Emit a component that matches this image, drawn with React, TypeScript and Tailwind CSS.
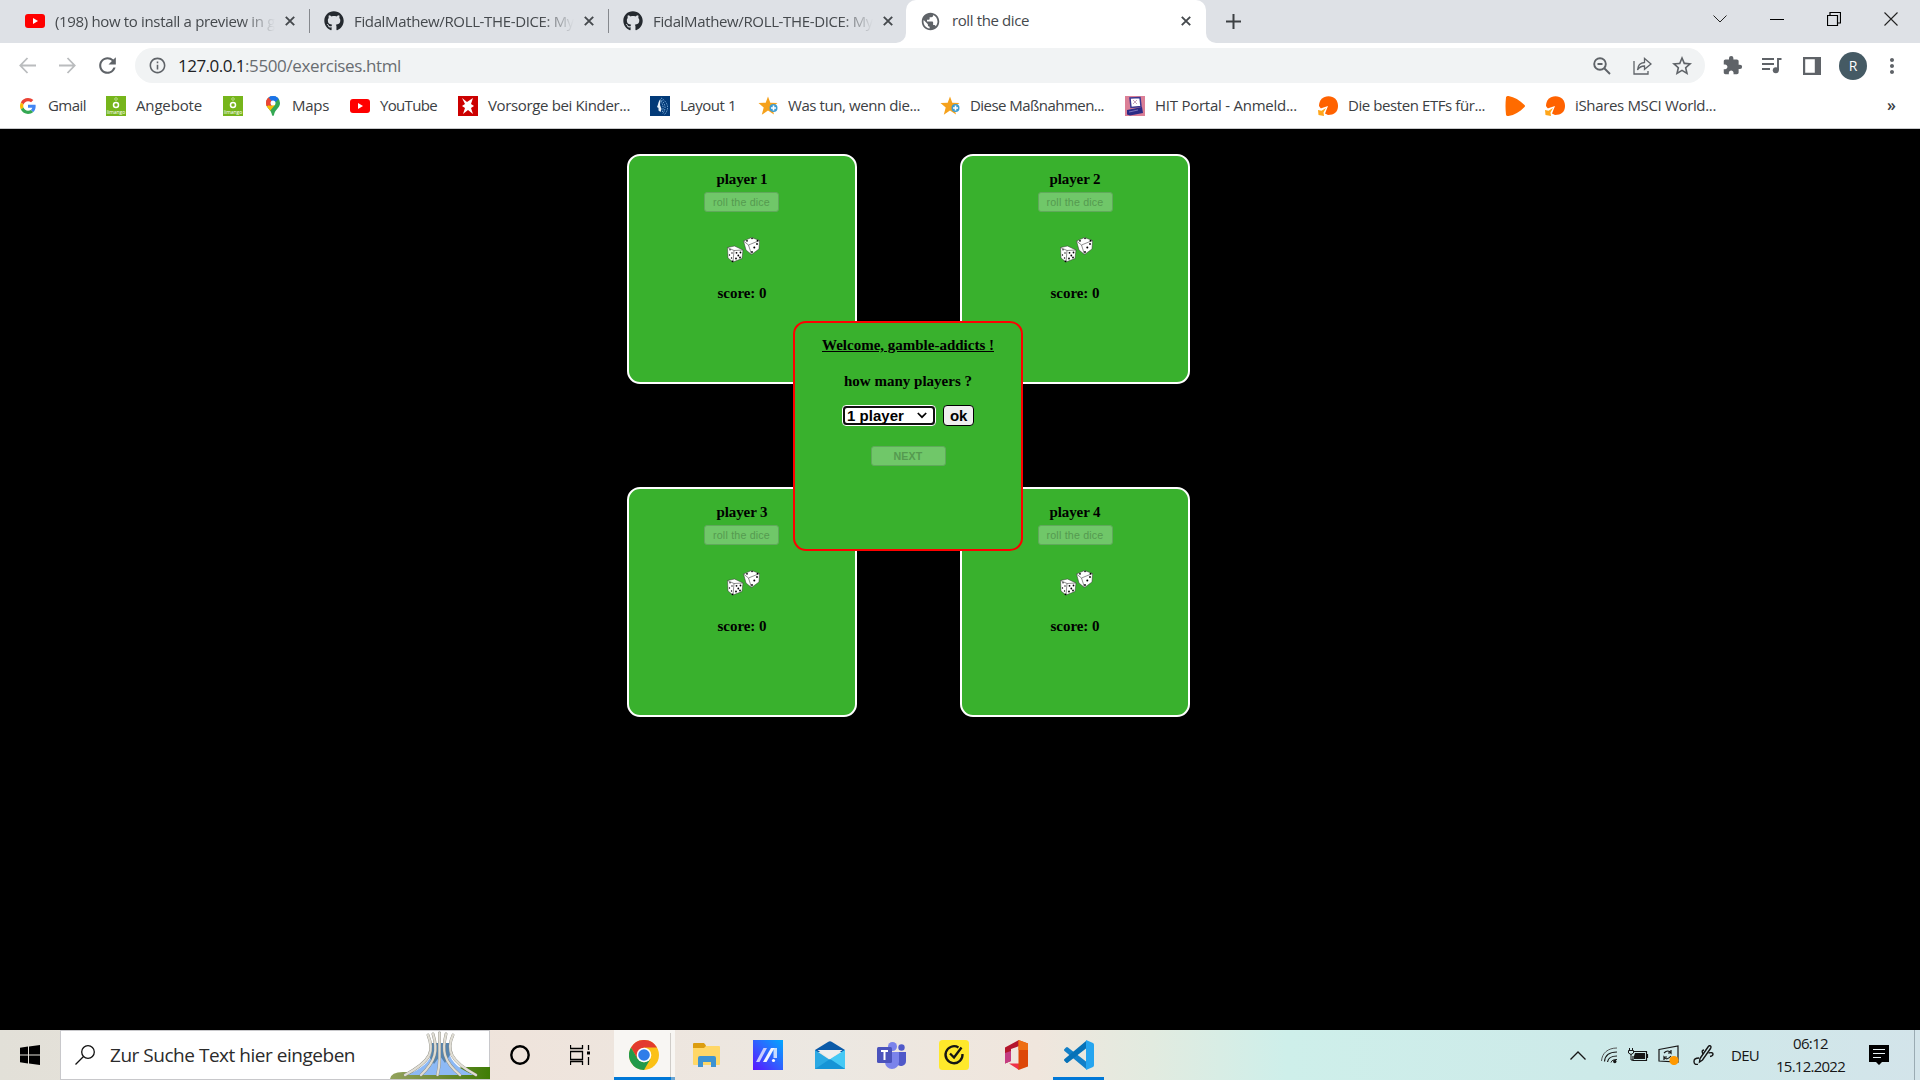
import { useLayoutEffect, useRef, useState, type ReactNode } from "react";
import {
  MdOutlineInfo,
  MdPublic,
  MdExtension,
  MdRefresh,
  MdStarOutline,
  MdMoreVert,
} from "react-icons/md";
import { FaGithub } from "react-icons/fa";

/** Single line of text whose tracking is computed so that it spans `w` pixels. */
function Fit({ w, className = "", children }: { w: number; className?: string; children: string }) {
  const ref = useRef<HTMLSpanElement>(null);
  const [spacing, setSpacing] = useState(0);
  useLayoutEffect(() => {
    if (ref.current) setSpacing((w - ref.current.getBoundingClientRect().width) / children.length);
  }, []);
  return (
    <span ref={ref} className={`inline-block shrink-0 whitespace-pre ${className}`} style={{ letterSpacing: `${spacing}px` }}>
      {children}
    </span>
  );
}

function YouTubeIcon() {
  return (
    <svg className="block h-[14px] w-5 shrink-0" viewBox="0 0 20 14">
      <rect width="20" height="14" rx="3" fill="#f00" />
      <path d="M8 4l5 3-5 3z" fill="#fff" />
    </svg>
  );
}

function CloseIcon() {
  return (
    <svg className="block size-[10px] shrink-0" viewBox="0 0 10 10">
      <path d="M0.8 0.8l8.4 8.4M9.2 0.8L0.8 9.2" stroke="#45494d" strokeWidth="1.9" />
    </svg>
  );
}

function Tab({ icon, title, w }: { icon: ReactNode; title: string; w: number }) {
  return (
    <div className="flex h-full w-[299px] items-center pl-[14px]">
      <div className="w-[30px]">{icon}</div>
      <div className="w-[220px] overflow-hidden pb-px [mask-image:linear-gradient(to_right,black_85%,transparent)]">
        <Fit w={w} className="text-[15px]">{title}</Fit>
      </div>
      <div className="ml-[10px]">
        <CloseIcon />
      </div>
      <div className="ml-auto h-6 w-px bg-[#85888d]" />
    </div>
  );
}

function TabStrip() {
  return (
    <div className="flex h-[43px] bg-[#dee1e6] text-[#45494d]">
      <div className="flex h-[42px] w-[907px] pl-[11px]">
        <Tab icon={<YouTubeIcon />} title="(198) how to install a preview in g" w={220} />
        <Tab icon={<FaGithub size={20} color="#24292f" />} title="FidalMathew/ROLL-THE-DICE: My" w={220} />
        <div className="flex h-full w-[290px] items-center pl-[14px]">
          <div className="w-[30px]">
            <FaGithub size={20} color="#24292f" />
          </div>
          <div className="w-[220px] overflow-hidden pb-px [mask-image:linear-gradient(to_right,black_85%,transparent)]">
            <Fit w={220} className="text-[15px]">FidalMathew/ROLL-THE-DICE: My</Fit>
          </div>
          <div className="ml-[10px]">
            <CloseIcon />
          </div>
        </div>
      </div>
      <div className="-ml-[11px] flex">
        <div className="h-full w-[10px] bg-white">
          <div className="h-full rounded-br-[10px] bg-[#dee1e6]" />
        </div>
        <div className="flex h-[43px] w-[300px] items-center rounded-t-[10px] bg-white pr-[15px] pb-px pl-[14px]">
          <MdPublic size={21} color="#5f6368" />
          <Fit w={77} className="ml-[11px] pb-px text-[15px]">roll the dice</Fit>
          <div className="ml-auto">
            <CloseIcon />
          </div>
        </div>
        <div className="h-full w-[10px] bg-white">
          <div className="h-full rounded-bl-[10px] bg-[#dee1e6]" />
        </div>
      </div>
      <svg className="mt-[14px] ml-[10px] block size-[15px]" viewBox="0 0 15 15">
        <path d="M7.5 0v15M0 7.5h15" stroke="#3c4043" strokeWidth="2" />
      </svg>
      <div className="mr-[22px] ml-auto flex h-[38px] items-center gap-[43px] text-black">
        <svg className="h-2 w-[14px]" viewBox="0 0 14 8">
          <path d="M.5.5L7 7 13.500.5" fill="none" stroke="#222" />
        </svg>
        <div className="h-px w-[14px] bg-black" />
        <svg className="size-[14px]" viewBox="0 0 14 14">
          <path d="M.5 3.500h10v10H.5zM3 3V.5h10.500V11H11" fill="none" stroke="#000" strokeWidth="1.2" />
        </svg>
        <svg className="size-[14px]" viewBox="0 0 14 14">
          <path d="M.5.5l13 13M13.500.5l-13 13" stroke="#222" strokeWidth="1.1" />
        </svg>
      </div>
    </div>
  );
}

function Arrow({ flip = false }: { flip?: boolean }) {
  return (
    <svg className={flip ? "size-[17px] rotate-180" : "size-[17px]"} viewBox="0 0 17 17">
      <path d="M17 8.500H2M8.500 1L1.300 8.500l7.200 7.500" fill="none" stroke="#babcbe" strokeWidth="1.8" />
    </svg>
  );
}

function Toolbar() {
  return (
    <div className="flex h-[43px] items-center bg-white pt-[2px]">
      <div className="ml-[19px]"><Arrow /></div>
      <div className="ml-[23px]"><Arrow flip /></div>
      <MdRefresh className="ml-[19px]" size={25} color="#5f6368" />
      <div className="ml-[15px] flex h-[35px] w-[1570px] items-center rounded-full bg-[#f1f3f4] pr-[11px] pl-[13px]">
        <MdOutlineInfo size={19} color="#5f6368" />
        <Fit w={67} className="ml-[11px] text-[17px] text-[#202124]">127.0.0.1</Fit>
        <Fit w={156} className="text-[17px] text-[#696d71]">:5500/exercises.html</Fit>
        <svg className="ml-auto size-[18px]" viewBox="0 0 18 18">
          <circle cx="7" cy="7" r="5.800" fill="none" stroke="#5f6368" strokeWidth="1.900" />
          <path d="M11 11l6 6M4.500 7h5" fill="none" stroke="#5f6368" strokeWidth="1.900" />
        </svg>
        <svg className="ml-[22px] h-[18px] w-[19px]" viewBox="0 0 19 18">
          <path d="M1 4v13h14v-3M4.500 13c.4-5 3-7.300 7-7.500V1.500L18 7l-6.500 5.300V9C8.500 9 6.300 10 4.500 13z" fill="none" stroke="#5f6368" strokeWidth="1.3" />
        </svg>
        <MdStarOutline className="ml-[18px]" size={24} color="#5f6368" />
      </div>
      <MdExtension className="ml-[17px]" size={21} color="#5f6368" />
      <svg className="ml-[19px] h-[17px] w-5" viewBox="0 0 20 17">
        <path d="M0 2h12M0 7h12M0 12h8M19.500 2h-3.500v11" fill="none" stroke="#5f6368" strokeWidth="1.9" />
        <circle cx="13.800" cy="13.300" r="3" fill="#5f6368" />
      </svg>
      <svg className="ml-[21px] size-[18px]" viewBox="0 0 18 18">
        <path d="M0 0h18v18H0zM2.200 2.200v13.600h9.600V2.200z" fill="#5f6368" fillRule="evenodd" />
      </svg>
      <div className="ml-[18px] flex size-7 items-center justify-center rounded-full bg-[#455a64] text-[14px] text-white">R</div>
      <MdMoreVert className="ml-[13px]" size={24} color="#5f6368" />
    </div>
  );
}

function GoogleG() {
  return (
    <svg className="size-4" viewBox="0 0 48 48">
      <path fill="#ea4335" d="M24 9.500c3.540 0 6.710 1.220 9.210 3.600l6.850-6.850C35.900 2.380 30.470 0 24 0 14.620 0 6.510 5.380 2.560 13.220l7.980 6.190C12.430 13.720 17.740 9.500 24 9.500z" />
      <path fill="#4285f4" d="M46.980 24.550c0-1.570-.15-3.090-.38-4.550H24v9.020h12.940c-.58 2.960-2.260 5.480-4.780 7.180l7.730 6c4.510-4.180 7.090-10.360 7.090-17.650z" />
      <path fill="#fbbc05" d="M10.530 28.590c-.48-1.450-.76-2.990-.76-4.590s.27-3.140.76-4.590l-7.980-6.190C.92 16.460 0 20.120 0 24c0 3.880.92 7.540 2.560 10.780l7.970-6.190z" />
      <path fill="#34a853" d="M24 48c6.480 0 11.930-2.130 15.890-5.810l-7.730-6c-2.150 1.450-4.920 2.300-8.160 2.300-6.260 0-11.570-4.220-13.470-9.910l-7.980 6.190C6.510 42.620 14.620 48 24 48z" />
    </svg>
  );
}

function LimangoIcon() {
  return (
    <div className="flex size-5 flex-col items-center justify-end bg-[#76b51b]">
      <svg className="h-[13px] w-3" viewBox="0 0 12 13">
        <circle cx="6" cy="9" r="2.500" fill="none" stroke="#fff" strokeWidth="1.500" />
        <circle cx="6" cy="3" r="1.300" fill="none" stroke="#b5d986" />
      </svg>
      <span className="h-[7px] text-[5px] leading-[6px] text-white">limango</span>
    </div>
  );
}

function MapsIcon() {
  return (
    <svg className="h-5 w-[14px]" viewBox="0 0 14 20">
      <clipPath id="pin">
        <path d="M7 0a7 7 0 0 1 7 7c0 5-5 6-6 12q-1 2-2 0C5 13 0 12 0 7a7 7 0 0 1 7-7z" />
      </clipPath>
      <g clipPath="url(#pin)">
        <rect width="14" height="20" fill="#34a853" />
        <path d="M0 15V8l4-4 5 5-6 7z" fill="#fbbc04" />
        <path d="M0 0h4l3 4-5 6H0z" fill="#ea4335" />
        <path d="M3 0h11L5 10 3.500 5z" fill="#4285f4" />
        <path d="M0 3l3-2 4 6-3 3-4-3z" fill="#ea4335" />
        <path d="M3 0h9l1 3-5 4-5-5z" fill="#1a73e8" />
      </g>
      <circle cx="7" cy="7" r="2.500" fill="#fff" />
    </svg>
  );
}

function VorsorgeIcon() {
  return (
    <svg className="size-5" viewBox="0 0 20 20">
      <rect width="20" height="20" fill="#c00" />
      <path d="M4 2l5 4 6-4-2 6 3 2-3 2 2 6-5-4-5 4 2-6-3-2 3-2z" fill="#fff" />
    </svg>
  );
}

function LayoutIcon() {
  return (
    <svg className="size-5" viewBox="0 0 20 20">
      <rect width="20" height="20" fill="#023a78" />
      <path d="M10.500 3C8 6 8.500 8 7 11l1.500 1v2.500l2 1.500 1-3-1.500-4z" fill="#e8f0f8" />
      <path d="M11 2c7 4 9 11 3 17M11.500 4c4 4 5 9 1 14M11 5c2 4 3 7 1 12" fill="none" stroke="#6fa1d0" strokeWidth="1" strokeDasharray="1.500 1" />
    </svg>
  );
}

function StarIcon() {
  return (
    <svg className="size-5" viewBox="0 0 20 20">
      <path d="M10 .5l2.300 6.200 7.200.2-5.500 4.300 2 7.300-6-4-6.200 4.300 1.900-7.400L.5 7l7.200-.3z" fill="#f5a11c" />
      <circle cx="15.500" cy="12" r="4" fill="#3c9bd0" />
      <path d="M15.500 9.500v5M13 12h5" stroke="#fff" strokeWidth="1.600" />
    </svg>
  );
}

function HitIcon() {
  return (
    <svg className="size-5" viewBox="0 0 20 20">
      <rect width="20" height="20" fill="#db7f96" />
      <path d="M5 2l10-.5 1 9-10 1z" fill="#fff" stroke="#3b3791" strokeWidth="1.500" />
      <path d="M8 4l4 4M12 4L8 8" stroke="#c8a4bd" />
      <path d="M2 14l15-3 1 6-13 2.500-3-1z" fill="#2b2a85" />
      <path d="M4 16l9-2" stroke="#7d75bd" />
    </svg>
  );
}

function EtfIcon() {
  return (
    <svg className="size-5" viewBox="0 0 20 20">
      <path d="M1 10C1 4 5 .3 10.500.3S20 4 20 10s-4 9-10 9L6 17z" fill="#ff6200" />
      <path d="M0 20l1-7 9-3-4 10z" fill="#fff" />
      <path d="M0 14l3.500.8L8 12l-2.500 4.500.5 3.500-5.500-1z" fill="#ffa61a" />
    </svg>
  );
}

function Bookmark({ icon, cell, w, label }: { icon: ReactNode; cell: string; w?: number; label?: string }) {
  return (
    <div className={`flex shrink-0 items-center ${cell}`}>
      <div className="flex w-[30px] items-center">{icon}</div>
      {label && w ? <Fit w={w} className="pb-[2px]">{label}</Fit> : null}
    </div>
  );
}

function Bookmarks() {
  return (
    <div className="flex h-[43px] items-center border-b border-[#c8c9cb] bg-white pb-0.5 pl-5 text-[15px] text-[#3c4043]">
      <div className="-ml-0.5 flex w-[88px] items-center">
        <div className="flex w-[30px] pl-0.5"><GoogleG /></div>
        <Fit w={38} className="pb-[2px]">Gmail</Fit>
      </div>
      <Bookmark cell="w-[117px]" icon={<LimangoIcon />} w={66} label="Angebote" />
      <Bookmark cell="w-[43px]" icon={<LimangoIcon />} />
      <div className="flex w-[84px] items-center">
        <div className="flex w-[26px]"><MapsIcon /></div>
        <Fit w={37} className="pb-[2px]">Maps</Fit>
      </div>
      <Bookmark cell="w-[108px]" icon={<YouTubeIcon />} w={57} label="YouTube" />
      <Bookmark cell="w-[192px]" icon={<VorsorgeIcon />} w={142} label="Vorsorge bei Kinder..." />
      <Bookmark cell="w-[108px]" icon={<LayoutIcon />} w={56} label="Layout 1" />
      <Bookmark cell="w-[182px]" icon={<StarIcon />} w={132} label="Was tun, wenn die..." />
      <Bookmark cell="w-[185px]" icon={<StarIcon />} w={134} label="Diese Maßnahmen..." />
      <Bookmark cell="w-[193px]" icon={<HitIcon />} w={142} label="HIT Portal - Anmeld..." />
      <Bookmark cell="w-[187px]" icon={<EtfIcon />} w={137} label="Die besten ETFs für..." />
      <Bookmark
        cell="w-[40px]"
        icon={
          <svg className="size-5" viewBox="0 0 20 20">
            <path d="M1 1.500C1 .5 2 0 3.500 0c6 1 11 4 16 9q1 1 0 2c-5 5-10 8-16 9C2 20 1 19.500 1 18.500q-1-8.500 0-17z" fill="#ff6b00" />
          </svg>
        }
      />
      <Bookmark cell="w-[180px]" icon={<EtfIcon />} w={141} label="iShares MSCI World..." />
      <span className="mr-6 ml-auto pb-[2px] text-[16px] font-semibold">»</span>
    </div>
  );
}

function Dice() {
  return (
    <svg className="block h-[27px] w-[34px]" viewBox="0 0 34 27">
      <path d="M1.500 10.500l7-1.500 8.500 4-1 8.500L7 25l-5-4z" fill="#fff" stroke="#333" strokeWidth=".5" />
      <path d="M1.500 10.500l6.500 3 9-.5M8 13.500L7 25" fill="none" stroke="#444" strokeWidth=".6" />
      <path d="M17.500 4l8-3.500 8 3-.5 8.500-7.500 5.500-5.500-4.500z" fill="#fff" stroke="#333" strokeWidth=".5" />
      <path d="M17.500 4l5 4 11-4.500M22.500 8l3 9.500" fill="none" stroke="#444" strokeWidth=".6" />
      <g fill="#000">
        <circle cx="4" cy="12.800" r=".7" /><circle cx="6" cy="16" r=".7" /><circle cx="3.500" cy="18" r=".7" /><circle cx="5.500" cy="21" r=".7" />
        <circle cx="10.500" cy="15.800" r=".9" /><circle cx="14.500" cy="15.500" r=".9" /><circle cx="12.300" cy="18.500" r=".9" /><circle cx="10" cy="21.500" r=".9" /><circle cx="14" cy="20.500" r=".9" />
        <circle cx="6.500" cy="24.300" r=".9" />
        <circle cx="21" cy="3.800" r=".9" /><circle cx="26" cy="1.500" r=".8" /><circle cx="31.500" cy="3.700" r=".9" />
        <circle cx="31" cy="7" r=".9" /><circle cx="28.300" cy="10.500" r="1" /><circle cx="26" cy="15" r=".9" />
      </g>
    </svg>
  );
}

const disabledButton =
  "flex h-5 w-[75px] items-center justify-center rounded-[3px] border border-[#60a95b] bg-[#70c769] font-['Liberation_Sans',Arial,sans-serif] text-[#559a50]";

function PlayerCard({ n }: { n: number }) {
  return (
    <div className="flex size-[230px] flex-col items-center rounded-[13px] border-2 border-white bg-[#39b12d] pt-[15px]">
      <div className="h-[21px] leading-[17px]"><Fit w={51}>{`player ${n}`}</Fit></div>
      <div className={n % 2 ? "-ml-px" : ""}>
        <div className={disabledButton}><Fit w={57} className="text-[10.67px] font-normal">roll the dice</Fit></div>
      </div>
      <div className="mt-[25px] ml-[2px]"><Dice /></div>
      <div className="mt-[21px] leading-[17px]"><Fit w={49}>score: 0</Fit></div>
    </div>
  );
}

function WelcomeDialog() {
  return (
    <div className="absolute top-[167px] left-[166px] flex size-[230px] flex-col items-center rounded-[13px] border-2 border-[#f00] bg-[#39b12d] pt-[14px]">
      <div className="leading-[17px] underline"><Fit w={172} className="underline">Welcome, gamble-addicts !</Fit></div>
      <div className="mt-[19px] leading-[17px]"><Fit w={128}>how many players ?</Fit></div>
      <div className="mt-[15px] flex items-center gap-[7px] font-['Liberation_Sans',Arial,sans-serif] text-[15px]">
        <div className="flex h-[21px] w-[94px] items-center justify-between rounded-[4px] border border-white bg-[#101010] p-[2px]">
          <div className="flex h-full w-full items-center justify-between rounded-[2px] bg-white pr-1.5 pl-[2px]">
            <Fit w={57} className="leading-none">1 player</Fit>
            <svg className="h-[7px] w-[10px]" viewBox="0 0 10 7">
              <path d="M.8 1L5 5.200 9.200 1" fill="none" stroke="#000" strokeWidth="1.700" />
            </svg>
          </div>
        </div>
        <div className="flex h-[21px] w-[31px] items-center justify-center rounded-[4px] border border-black bg-[#efefef]">
          <Fit w={17} className="leading-none">ok</Fit>
        </div>
      </div>
      <div className={`mt-5 ${disabledButton}`}><Fit w={29} className="text-[10.67px]">NEXT</Fit></div>
    </div>
  );
}

function Monument() {
  return (
    <svg className="block h-[48px] w-[100px]" viewBox="0 0 100 48">
      <defs>
        <linearGradient id="grass"><stop offset="0" stopColor="#93a35e" /><stop offset=".5" stopColor="#6f8a35" /><stop offset="1" stopColor="#3f7d05" /></linearGradient>
      </defs>
      <path d="M0 48q1-7 13-7l30 1 30-6h27v12z" fill="url(#grass)" />
      <path d="M42 12h17v9c2 11 12 18 25 23H17c14-6 24-14 25-23z" fill="#8db9f5" />
      <path d="M42 12h17l1 12-5 8-5-7-6 8-4-6z" fill="#406d8f" opacity=".7" />
      <g fill="none" stroke="#8b8b82" strokeWidth="2.900" strokeLinecap="round">
        <path d="M38 4c6 15 5 25-23 40M43 3c5 16 3 27-12 41M49.500 2v26q0 8-2 16M56 3c-4 16-3 27 14 41M63 4c-7 15-3 26 23 40" />
      </g>
      <g fill="none" stroke="#e0ddd4" strokeWidth="2.200" strokeLinecap="round">
        <path d="M38 4c6 15 5 25-23 40M43 3c5 16 3 27-12 41M49.500 2v26q0 8-2 16M56 3c-4 16-3 27 14 41M63 4c-7 15-3 26 23 40" />
      </g>
    </svg>
  );
}

function ChromeIcon() {
  return (
    <svg className="size-[30px]" viewBox="0 0 30 30">
      <circle cx="15" cy="15" r="15" fill="#fbc116" />
      <path d="M2 7.500A15 15 0 0 1 28 7.500H15L8.500 18.700z" fill="#e33b2e" />
      <path d="M2 7.500l6.500 11.200L15 22.500l6.500-3.800L15 30A15 15 0 0 1 2 7.500z" fill="#229a4a" />
      <circle cx="15" cy="15" r="7.300" fill="#fff" />
      <circle cx="15" cy="15" r="5.800" fill="#2f7de9" />
    </svg>
  );
}

function FolderIcon() {
  return (
    <svg className="h-6 w-[27px]" viewBox="0 0 27 24">
      <path d="M0 1q0-1 1-1h10l2 2.500V6H0z" fill="#dc9d10" />
      <path d="M0 5h11l2-2h13q1 0 1 1v17q0 1-1 1H1q-1 0-1-1z" fill="#ffd767" />
      <path d="M5 24v-9q0-2 2-2h14q2 0 2 2v9h-5v-5h-8v5z" fill="#3e93d2" />
    </svg>
  );
}

function AsusIcon() {
  return (
    <svg className="size-[30px]" viewBox="0 0 30 30">
      <defs>
        <linearGradient id="asus" x1="0" y1="1" x2="1" y2="0">
          <stop offset="0" stopColor="#5b13ff" /><stop offset=".5" stopColor="#3160ff" /><stop offset="1" stopColor="#00a8ff" />
        </linearGradient>
      </defs>
      <rect width="30" height="30" fill="url(#asus)" />
      <path d="M3 22L10.500 8h3.500L6.500 22z" fill="#c9cdff" />
      <path d="M10 22L18 8h3.500l-8 14z" fill="#f3f4ff" />
      <path d="M20.500 8H24v10h-3.500z" fill="#fff" opacity=".75" />
      <circle cx="20.500" cy="20.500" r="1.600" fill="#fff" />
    </svg>
  );
}

function MailIcon() {
  return (
    <svg className="size-[30px]" viewBox="0 0 30 30">
      <path d="M0 10L13 2q2-1.500 4 0l13 8v2H0z" fill="#0a5aa8" />
      <path d="M0 10l15 10L30 10v19H0z" fill="#2ba9e3" />
      <path d="M30 10v19L15 19z" fill="#45c9f5" />
      <path d="M0 29h30L15 19z" fill="#1694d6" />
      <path d="M2.500 10h25L15 19z" fill="#f0efee" />
    </svg>
  );
}

function TeamsIcon() {
  return (
    <svg className="size-[30px]" viewBox="0 0 30 30">
      <circle cx="15.500" cy="6.500" r="4.500" fill="#7b83eb" />
      <circle cx="24.500" cy="7.500" r="3.200" fill="#5059c9" />
      <path d="M19 12h10v9a5 5 0 0 1-9 3z" fill="#5059c9" />
      <path d="M8 12h14v10a7 7 0 0 1-14 0z" fill="#7b83eb" />
      <rect y="7" width="15" height="16" rx="1.500" fill="#4b53bc" />
      <path d="M4 11h7M7.500 11v9" stroke="#fff" strokeWidth="2" />
    </svg>
  );
}

function NortonIcon() {
  return (
    <svg className="size-[30px]" viewBox="0 0 30 30">
      <rect width="30" height="30" rx="3.500" fill="#ffe92b" />
      <path d="M19.500 7.500A8.500 8.500 0 1 0 23.500 14M11 13.500l4 4 7.500-10" fill="none" stroke="#151515" strokeWidth="2.300" />
    </svg>
  );
}

function OfficeIcon() {
  return (
    <svg className="h-[30px] w-[23px]" viewBox="0 0 23 30">
      <path d="M0 7.500L14 0v6L6 9v12l-6 2.500z" fill="#b4162c" />
      <path d="M0 13l6-2v10l-6 2.500z" fill="#c43d83" />
      <path d="M4 23.500h10V30z" fill="#ef3147" />
      <path d="M13.500 0L23 3.500v23L13.500 30z" fill="#dd4708" />
      <path d="M13.500 0L23 3.500V10h-9.500z" fill="#ee6e13" />
    </svg>
  );
}

function VsCodeIcon() {
  return (
    <svg className="size-[30px]" viewBox="0 0 30 30">
      <path d="M.5 11q-1-1 0-2L2 7.500q1-1 2 0L22 21.500V29z" fill="#1280c8" />
      <path d="M.5 19q-1 1 0 2L2 22.500q1 1 2 0L22 8.500V1z" fill="#0672b8" />
      <path d="M22 0l7 3q1 .5 1 2v20q0 1.500-1 2l-7 3z" fill="#25a5ef" />
    </svg>
  );
}

function TaskButton({ children, className = "" }: { children: ReactNode; className?: string }) {
  return <div className={`flex h-[50px] w-[62px] shrink-0 items-center justify-center ${className}`}>{children}</div>;
}

function Tray() {
  return (
    <div className="ml-auto flex items-center text-[#161616]">
      <svg className="h-[9px] w-4" viewBox="0 0 16 9">
        <path d="M.5 8.500L8 1l7.500 7.500" fill="none" stroke="currentColor" strokeWidth="1.300" />
      </svg>
      <svg className="ml-[15px] size-[17px]" viewBox="0 0 17 17">
        <g fill="none" stroke="currentColor">
          <path d="M.5 14C1 6 7 1 16 1" stroke="#555" /><path d="M3.500 14.500C4 8.500 8.500 5 16 5M6.500 15C7 11.500 10 9 16 9" strokeWidth="1.200" /><path d="M10 15.500c.5-2 2.500-3 6-3" />
        </g>
        <circle cx="13.800" cy="14.500" r="1.700" fill="currentColor" />
      </svg>
      <svg className="ml-[10px] h-[14px] w-[21px]" viewBox="0 0 21 14">
        <path d="M5 3.500h13.500v9H5V8M19.500 6v4" fill="none" stroke="currentColor" strokeWidth="1.200" />
        <path d="M7 5h10v6H6V8z" fill="currentColor" />
        <path d="M1.500 0v2.500M4.500 0v2.500M.5 2.500h5V5L3 6.500.5 5zM3 6v6h2" fill="none" stroke="currentColor" />
      </svg>
      <svg className="ml-[9px] h-[20px] w-[21px]" viewBox="0 0 21 20">
        <path d="M1 4.500L20 1v16L1 16z" fill="none" stroke="currentColor" strokeWidth="1.200" />
        <path d="M6 8q4-4 7 0V5m0 3h-3M13 11q-4 5-7 1v3m0-3h3" fill="none" stroke="currentColor" strokeWidth="1.200" />
        <circle cx="16" cy="15.500" r="4.600" fill="#ff9900" />
      </svg>
      <svg className="ml-[14px] h-[20px] w-[21px]" viewBox="0 0 21 20">
        <path d="M7 13.500L15 2q1.500-2 2.500-1t0 2.500L9.500 15 6.500 17z" fill="none" stroke="currentColor" strokeWidth="1.400" />
        <path d="M10 9q-2-4 1-4M15.500 8q4.500-1 4.500 1t-3 2.500M6 13q-5 0-5 3.500T5 19.500" fill="none" stroke="currentColor" strokeWidth="1.400" />
      </svg>
      <Fit w={28} className="ml-[17px] text-[15px]">DEU</Fit>
      <div className="ml-[17px] flex w-[69px] flex-col items-center text-[15px] leading-[23px]">
        <Fit w={35}>06:12</Fit>
        <Fit w={69}>15.12.2022</Fit>
      </div>
      <svg className="mr-[25px] ml-[24px] block h-[20px] w-[20px]" viewBox="0 0 20 20">
        <path d="M0 0h20v17h-7l-3 3-3-3H0z" fill="#000" />
        <path d="M4 4.500h12M4 8.500h12M4 12.500h8" stroke="#e7f1f3" strokeWidth="1.200" />
      </svg>
      <div className="mr-[5px] h-[50px] w-px bg-[#9aabb3]" />
    </div>
  );
}

function Taskbar() {
  return (
    <div className="flex h-[50px] items-center bg-[linear-gradient(90deg,#e2e0d8_0%,#efe4dc_27%,#ece8e2_43%,#f0e6dd_54%,#e2ebe0_60%,#ceefea_67%,#cdeae9_83%,#d3e4ea_100%)]">
      <div className="flex w-[60px] justify-center">
        <svg className="size-5" viewBox="0 0 20 20">
          <path d="M0 2.800L8 1.600v7.900H0zM9 1.500L20 0v9.500H9zM0 10.500h8v7.900l-8-1.200zM9 10.500h11V20L9 18.500z" fill="#000" />
        </svg>
      </div>
      <div className="flex h-[50px] w-[430px] items-center border border-[#c8c8cb] bg-white pl-[14px] text-[#2b2b2b]">
        <svg className="size-5" viewBox="0 0 20 20">
          <circle cx="13" cy="7" r="6.300" fill="none" stroke="#111" strokeWidth="1.300" />
          <path d="M8.500 11.500L.5 19.500" stroke="#111" strokeWidth="1.300" />
        </svg>
        <Fit w={245} className="ml-[15px] text-[19px]">Zur Suche Text hier eingeben</Fit>
        <div className="-mr-px ml-auto"><Monument /></div>
      </div>
      <TaskButton className="ml-[-1px]">
        <svg className="size-5" viewBox="0 0 20 20"><circle cx="10" cy="10" r="8.700" fill="none" stroke="#000" strokeWidth="2.400" /></svg>
      </TaskButton>
      <TaskButton className="ml-[-2px]">
        <svg className="size-5" viewBox="0 0 20 20">
          <path d="M.5 0v3.500h12V0M.5 6.500h12v8H.5zM.5 20v-3.500h12V20M18.500 0v5M18.500 12v8" fill="none" stroke="#000" strokeWidth="1.300" />
          <path d="M17 6.500h3v3h-3z" fill="#000" />
        </svg>
      </TaskButton>
      <div className="ml-[3px] flex h-[50px] w-[61px] flex-col bg-[#f8f6f3]">
        <div className="flex flex-1 pt-[3px]">
          <div className="flex w-[57px] items-center justify-end border-r border-[#cfccc8] pr-[11px]"><ChromeIcon /></div>
        </div>
        <div className="h-[3px] border-r-4 border-[#6ba5d2] bg-[#0078d7]" />
      </div>
      <TaskButton><FolderIcon /></TaskButton>
      <TaskButton><AsusIcon /></TaskButton>
      <TaskButton><MailIcon /></TaskButton>
      <TaskButton><TeamsIcon /></TaskButton>
      <TaskButton><NortonIcon /></TaskButton>
      <TaskButton><OfficeIcon /></TaskButton>
      <div className="ml-[6px] flex h-[50px] w-[51px] flex-col">
        <div className="flex flex-1 items-center justify-center pt-[3px]"><VsCodeIcon /></div>
        <div className="h-[3px] bg-[#0078d7]" />
      </div>
      <Tray />
    </div>
  );
}

export default function App() {
  return (
    <div className="flex h-[1080px] w-[1920px] flex-col overflow-hidden bg-black font-['Open_Sans','Noto_Sans',sans-serif]">
      <TabStrip />
      <Toolbar />
      <Bookmarks />
      <main className="flex-1 pt-[25px] pl-[627px] font-['Liberation_Serif','Times_New_Roman',serif] text-[15px] font-bold">
        <div className="relative grid w-[563px] grid-cols-2 gap-[103px]">
          <PlayerCard n={1} />
          <PlayerCard n={2} />
          <PlayerCard n={3} />
          <PlayerCard n={4} />
          <WelcomeDialog />
        </div>
      </main>
      <Taskbar />
    </div>
  );
}
